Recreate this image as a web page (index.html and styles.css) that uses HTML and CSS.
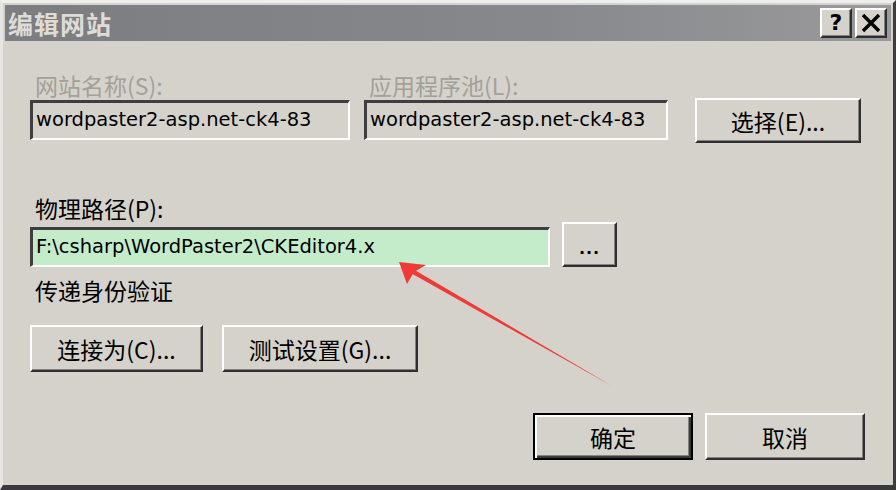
FILE: index.html
```html
<!DOCTYPE html>
<html lang="zh-CN">
<head>
<meta charset="utf-8">
<title>编辑网站</title>
<link rel="stylesheet" href="styles.css">
</head>
<body>
<div class="window">
  <div class="titlebar">
    <span class="title">编辑网站</span>
    <div class="tb-buttons">
      <span class="tb-btn">?</span>
      <span class="tb-btn close">
        <svg width="22" height="20" viewBox="0 0 22 20"><path d="M3 2 L19 18 M19 2 L3 18" stroke="#000" stroke-width="3.4" fill="none"/></svg>
      </span>
    </div>
  </div>
  <div class="content">
    <div class="row1">
      <div class="field f1">
        <div class="label disabled">网站名称(S):</div>
        <div class="input">wordpaster2-asp.net-ck4-83</div>
      </div>
      <div class="field f2">
        <div class="label disabled">应用程序池(L):</div>
        <div class="input">wordpaster2-asp.net-ck4-83</div>
      </div>
      <div class="btn select">选择(E)...</div>
    </div>
    <div class="label path-label">物理路径(P):</div>
    <div class="row2">
      <div class="input path">F:\csharp\WordPaster2\CKEditor4.x</div>
      <div class="btn browse">...</div>
    </div>
    <div class="label auth">传递身份验证</div>
    <div class="row3">
      <div class="btn connect">连接为(C)...</div>
      <div class="btn test">测试设置(G)...</div>
    </div>
    <div class="row4">
      <div class="btn default">确定</div>
      <div class="btn cancel">取消</div>
    </div>
  </div>
  <svg class="arrow" width="896" height="490" viewBox="0 0 896 490">
    <polygon points="612,386 411,268 409,272" fill="#f03a35"/>
    <polygon points="399,262 426,265 414,272 407,284" fill="#f03a35"/>
    <polygon points="612,386 407,266 413,270" fill="#f03a35"/>
  </svg>
</div>
</body>
</html>
```
FILE: styles.css
```css
html, body {
  margin: 0;
  padding: 0;
}
body {
  width: 896px;
  height: 490px;
  overflow: hidden;
  background: #d5d2cb;
  font-family: "DejaVu Sans", "Noto Sans CJK SC", sans-serif;
}
.window {
  position: relative;
  width: 896px;
  height: 490px;
  box-sizing: border-box;
  background: #d5d2cb;
  border-top: 3px solid #eeeeec;
  border-left: 3px solid #e6e5e1;
  border-right: 3px solid #3c3b3d;
  border-bottom: 5px solid #3a393b;
  padding: 2px 2px 0 2px;
}
.titlebar {
  height: 36px;
  background: linear-gradient(to right, #7c7d80, #87888b 60%, #9a9a9c);
  display: flex;
  align-items: center;
  justify-content: space-between;
  padding: 0 4px 0 3px;
}
.title {
  color: #dedcd7;
  font-family: "Noto Sans CJK SC", sans-serif;
  font-weight: 700;
  font-size: 25px;
  letter-spacing: 1px;
  line-height: 36px;
}
.tb-buttons {
  display: flex;
  gap: 3px;
}
.tb-btn {
  width: 28px;
  height: 26px;
  background: #d5d2cb;
  border-top: 2px solid #ffffff;
  border-left: 2px solid #ffffff;
  border-right: 2px solid #2e2d2f;
  border-bottom: 2px solid #2e2d2f;
  box-shadow: inset -1px -1px 0 #808080;
  display: flex;
  align-items: center;
  justify-content: center;
  font-family: "DejaVu Sans", sans-serif;
  font-weight: 700;
  font-size: 22px;
  line-height: 1;
  color: #000;
}
.content {
  padding: 29px 0 0 25px;
  color: #000;
}
.label {
  font-family: "Noto Sans CJK SC", sans-serif;
  font-size: 23px;
  line-height: 30px;
  height: 30px;
  padding-left: 5px;
  white-space: nowrap;
}
.label.disabled {
  color: #a3a099;
}
.row1 {
  display: flex;
  align-items: flex-end;
}
.field.f1 { width: 320px; }
.field.f2 { width: 304px; margin-left: 14px; }
.input {
  box-sizing: border-box;
  height: 40px;
  background: #d5d2cb;
  border-top: 3px solid #3e3d3f;
  border-left: 3px solid #3e3d3f;
  border-right: 2px solid #fdfdfd;
  border-bottom: 2px solid #fdfdfd;
  font-family: "DejaVu Sans", "Noto Sans CJK SC", sans-serif;
  font-size: 19.5px;
  line-height: 34px;
  padding-left: 3px;
  white-space: nowrap;
  overflow: hidden;
}
.btn {
  box-sizing: border-box;
  background: #d5d2cb;
  border-top: 2px solid #ffffff;
  border-left: 2px solid #ffffff;
  border-right: 2px solid #2e2d2f;
  border-bottom: 2px solid #2e2d2f;
  box-shadow: inset -1px -1px 0 #858380;
  display: flex;
  align-items: center;
  justify-content: center;
  font-family: "Noto Sans CJK SC", sans-serif;
  font-size: 23px;
  color: #000;
  white-space: nowrap;
}
.btn.select {
  width: 166px;
  height: 45px;
  margin-left: 27px;
  margin-bottom: -3px;
}
.path-label {
  margin-top: 53px;
}
.row2 {
  display: flex;
  align-items: flex-start;
  margin-top: 4px;
}
.input.path {
  width: 520px;
  height: 40px;
  background: #c4ecca;
}
.btn.browse {
  width: 55px;
  height: 45px;
  margin-left: 12px;
  margin-top: -5px;
  font-family: "DejaVu Sans", sans-serif;
  font-weight: 700;
  font-size: 16px;
  letter-spacing: 1px;
  padding-top: 8px;
}
.auth {
  margin-top: 8px;
}
.row3 {
  display: flex;
  gap: 19px;
  margin-top: 20px;
}
.btn.connect { width: 173px; height: 47px; }
.btn.test { width: 196px; height: 47px; }
.row4 {
  display: flex;
  gap: 12px;
  margin-top: 41px;
  padding-left: 503px;
}
.btn.default {
  width: 160px;
  height: 47px;
  border: 2px solid #000;
  box-shadow: inset 2px 2px 0 #ffffff, inset -2px -2px 0 #3a3a3a, inset -3px -3px 0 #858380;
}
.btn.cancel {
  width: 160px;
  height: 47px;
}
.arrow {
  position: absolute;
  left: -3px;
  top: -3px;
  pointer-events: none;
}
```
